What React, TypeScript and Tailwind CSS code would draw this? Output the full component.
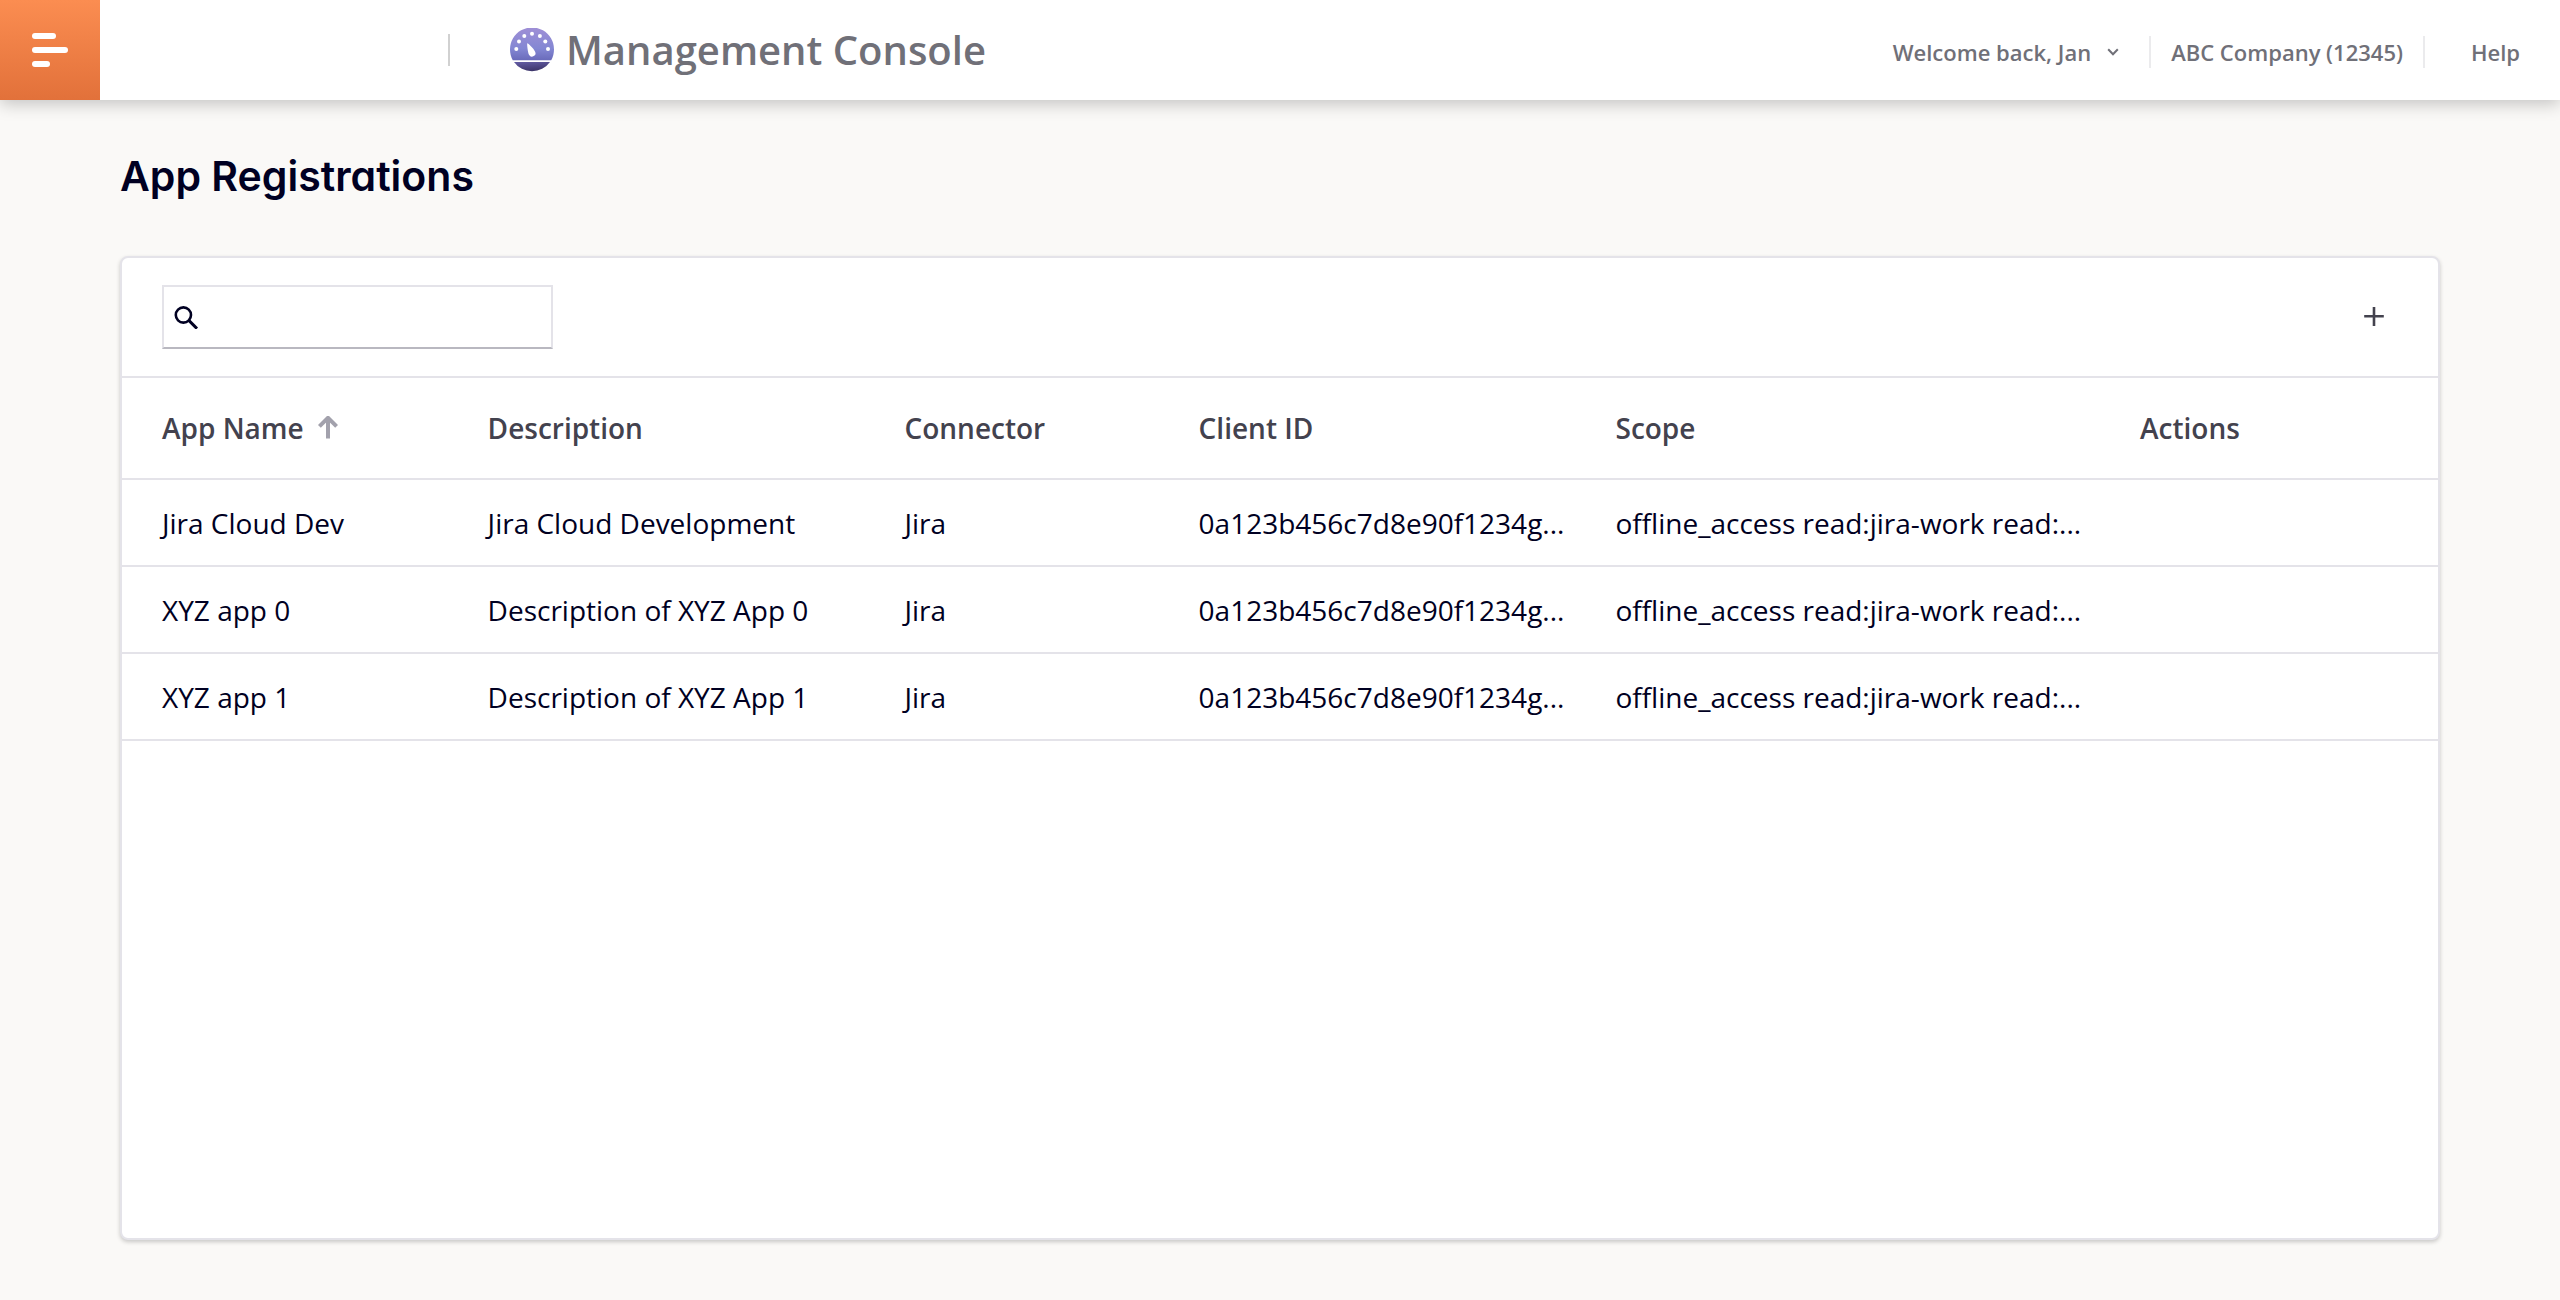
import { useState } from "react";

const apps = [
  {
    name: "Jira Cloud Dev",
    description: "Jira Cloud Development",
    connector: "Jira",
    clientId: "0a123b456c7d8e90f1234g...",
    scope: "offline_access read:jira-work read:...",
  },
  {
    name: "XYZ app 0",
    description: "Description of XYZ App 0",
    connector: "Jira",
    clientId: "0a123b456c7d8e90f1234g...",
    scope: "offline_access read:jira-work read:...",
  },
  {
    name: "XYZ app 1",
    description: "Description of XYZ App 1",
    connector: "Jira",
    clientId: "0a123b456c7d8e90f1234g...",
    scope: "offline_access read:jira-work read:...",
  },
];

function GaugeIcon() {
  return (
    <svg viewBox="0 0 44 44" className="size-11 shrink-0" aria-hidden="true">
      <defs>
        <linearGradient id="dial" x1="0" y1="0" x2="0" y2="1">
          <stop offset="0" stopColor="#9f8fd6" />
          <stop offset="0.65" stopColor="#8387d3" />
          <stop offset="1" stopColor="#6a6bbb" />
        </linearGradient>
        <linearGradient id="base" x1="0.3" y1="0" x2="0.6" y2="1">
          <stop offset="0" stopColor="#6059a0" />
          <stop offset="1" stopColor="#3a3266" />
        </linearGradient>
      </defs>
      <path d="M2.8 32.2A22 22 0 1 1 41.2 32.2Z" fill="url(#dial)" />
      <path d="M4 34H40A22 22 0 0 1 4 34Z" fill="url(#base)" />
      <g fill="#fff">
        <circle cx="22" cy="5.7" r="2" />
        <circle cx="14.3" cy="8" r="2" />
        <circle cx="29.9" cy="8" r="2" />
        <circle cx="9" cy="13.6" r="2" />
        <circle cx="35.3" cy="13.6" r="2" />
        <circle cx="6.3" cy="21" r="2" />
        <circle cx="38" cy="21" r="2" />
        <path d="M17.3 15.2 C17.8 14.9 23.5 20.2 25 23.4 A3.4 3.4 0 0 1 19 26.8 C17.8 24.5 16.8 15.6 17.3 15.2Z" />
      </g>
    </svg>
  );
}

function Header() {
  return (
    <header className="relative flex h-[100px] items-center bg-white text-[#707078] shadow-[0_4px_16px_rgba(0,0,0,0.22)]">
      <button
        type="button"
        aria-label="Open menu"
        className="flex size-[100px] shrink-0 items-center justify-center bg-linear-to-b from-[#fb8d51] to-[#e2713a]"
      >
        <svg viewBox="0 0 36 34" className="h-[34px] w-9" fill="#fff">
          <rect width="24" height="6" rx="3" />
          <rect y="14" width="36" height="6" rx="3" />
          <rect y="28" width="18" height="6" rx="3" />
        </svg>
      </button>

      <div className="ml-[348px] h-8 w-0.5 bg-[#d1d1d1]" />

      <div className="ml-[60px] flex items-center gap-3">
        <GaugeIcon />
        <span className="text-[40px] leading-[54px] font-semibold whitespace-nowrap">Management Console</span>
      </div>

      <nav className="mt-1 ml-auto flex items-center pr-10 text-[22px] leading-8 font-semibold whitespace-nowrap">
        <button type="button" className="flex items-center gap-4 pr-[30px]">
          Welcome back, Jan
          <svg viewBox="0 0 12 8" className="h-2 w-3" fill="none" stroke="currentColor" strokeWidth="2">
            <path d="M1.2 1.2 6 6.2 10.8 1.2" />
          </svg>
        </button>
        <span className="border-x-2 border-[#ebebed] px-5">ABC Company (12345)</span>
        <a href="#help" className="pl-[46px]">Help</a>
      </nav>
    </header>
  );
}

export default function App() {
  const [query, setQuery] = useState("");

  const rows = apps.filter((app) => app.name.toLowerCase().includes(query.toLowerCase()));

  return (
    <div className="flex min-h-screen flex-col bg-[#faf9f7] font-['Open_Sans',sans-serif] text-[#000022]">
      <Header />

      <main className="flex flex-1 flex-col px-[120px] pt-[46px] pb-[60px]">
        <h1 className="mb-[50px] font-[Inter,sans-serif] text-[41px] leading-[60px] font-semibold [font-feature-settings:'cv11']">
          App Registrations
        </h1>

        <section className="flex-1 rounded-lg border-2 border-[#e4e3e9] bg-white shadow-[0_2px_4px_rgba(0,0,0,0.2)]">
          <div className="flex h-[120px] items-center justify-between border-b-2 border-[#e4e3e9] px-10">
            <label className="flex h-16 w-[391px] items-center gap-3 border-2 border-[#e4e3e9] border-b-[#b9b8c0] px-2.5">
              <svg viewBox="0 0 24 24" className="size-6 shrink-0" fill="none" stroke="currentColor" strokeWidth="2.6">
                <circle cx="9.4" cy="10" r="7.6" />
                <path d="M14.8 15.4 23 23.6" strokeWidth="3" />
              </svg>
              <input
                type="text"
                aria-label="Search"
                value={query}
                onChange={(e) => setQuery(e.target.value)}
                className="min-w-0 flex-1 text-[28px] outline-none"
              />
            </label>
            <button type="button" aria-label="Add app" className="flex size-12 items-center justify-center text-[#43424e]">
              <svg viewBox="0 0 20 20" className="size-5" stroke="currentColor" strokeWidth="2.6">
                <path d="M10 -0.5V19M0.2 9.2H19.8" />
              </svg>
            </button>
          </div>

          <table className="w-full table-fixed text-left text-[28px] leading-10">
            <thead className="text-[#43424e]">
              <tr className="h-[101px] border-b-2 border-[#e4e3e9]">
                <th className="w-[14.75%] pr-6 pl-10 font-semibold">
                  <button type="button" className="flex items-center gap-3.5">
                    App Name
                    <svg viewBox="0 0 20 24" className="h-6 w-5 text-[#a2a1ac]" fill="none" stroke="currentColor" strokeWidth="4">
                      <path d="M10 22.5V2M1.4 10.4 10 1.8 18.6 10.4" />
                    </svg>
                  </button>
                </th>
                <th className="w-[18%] px-6 font-semibold">Description</th>
                <th className="w-[12.7%] px-6 font-semibold">Connector</th>
                <th className="w-[18%] px-6 font-semibold">Client ID</th>
                <th className="w-[22.65%] px-6 font-semibold">Scope</th>
                <th className="px-6 font-semibold">Actions</th>
              </tr>
            </thead>
            <tbody>
              {rows.map((app) => (
                <tr key={app.name} className="h-[87px] border-b-2 border-[#e4e3e9]">
                  <td className="truncate pr-6 pl-10">{app.name}</td>
                  <td className="truncate px-6">{app.description}</td>
                  <td className="truncate px-6">{app.connector}</td>
                  <td className="truncate px-6">{app.clientId}</td>
                  <td className="truncate px-6">{app.scope}</td>
                  <td className="px-6"></td>
                </tr>
              ))}
            </tbody>
          </table>
        </section>
      </main>
    </div>
  );
}
